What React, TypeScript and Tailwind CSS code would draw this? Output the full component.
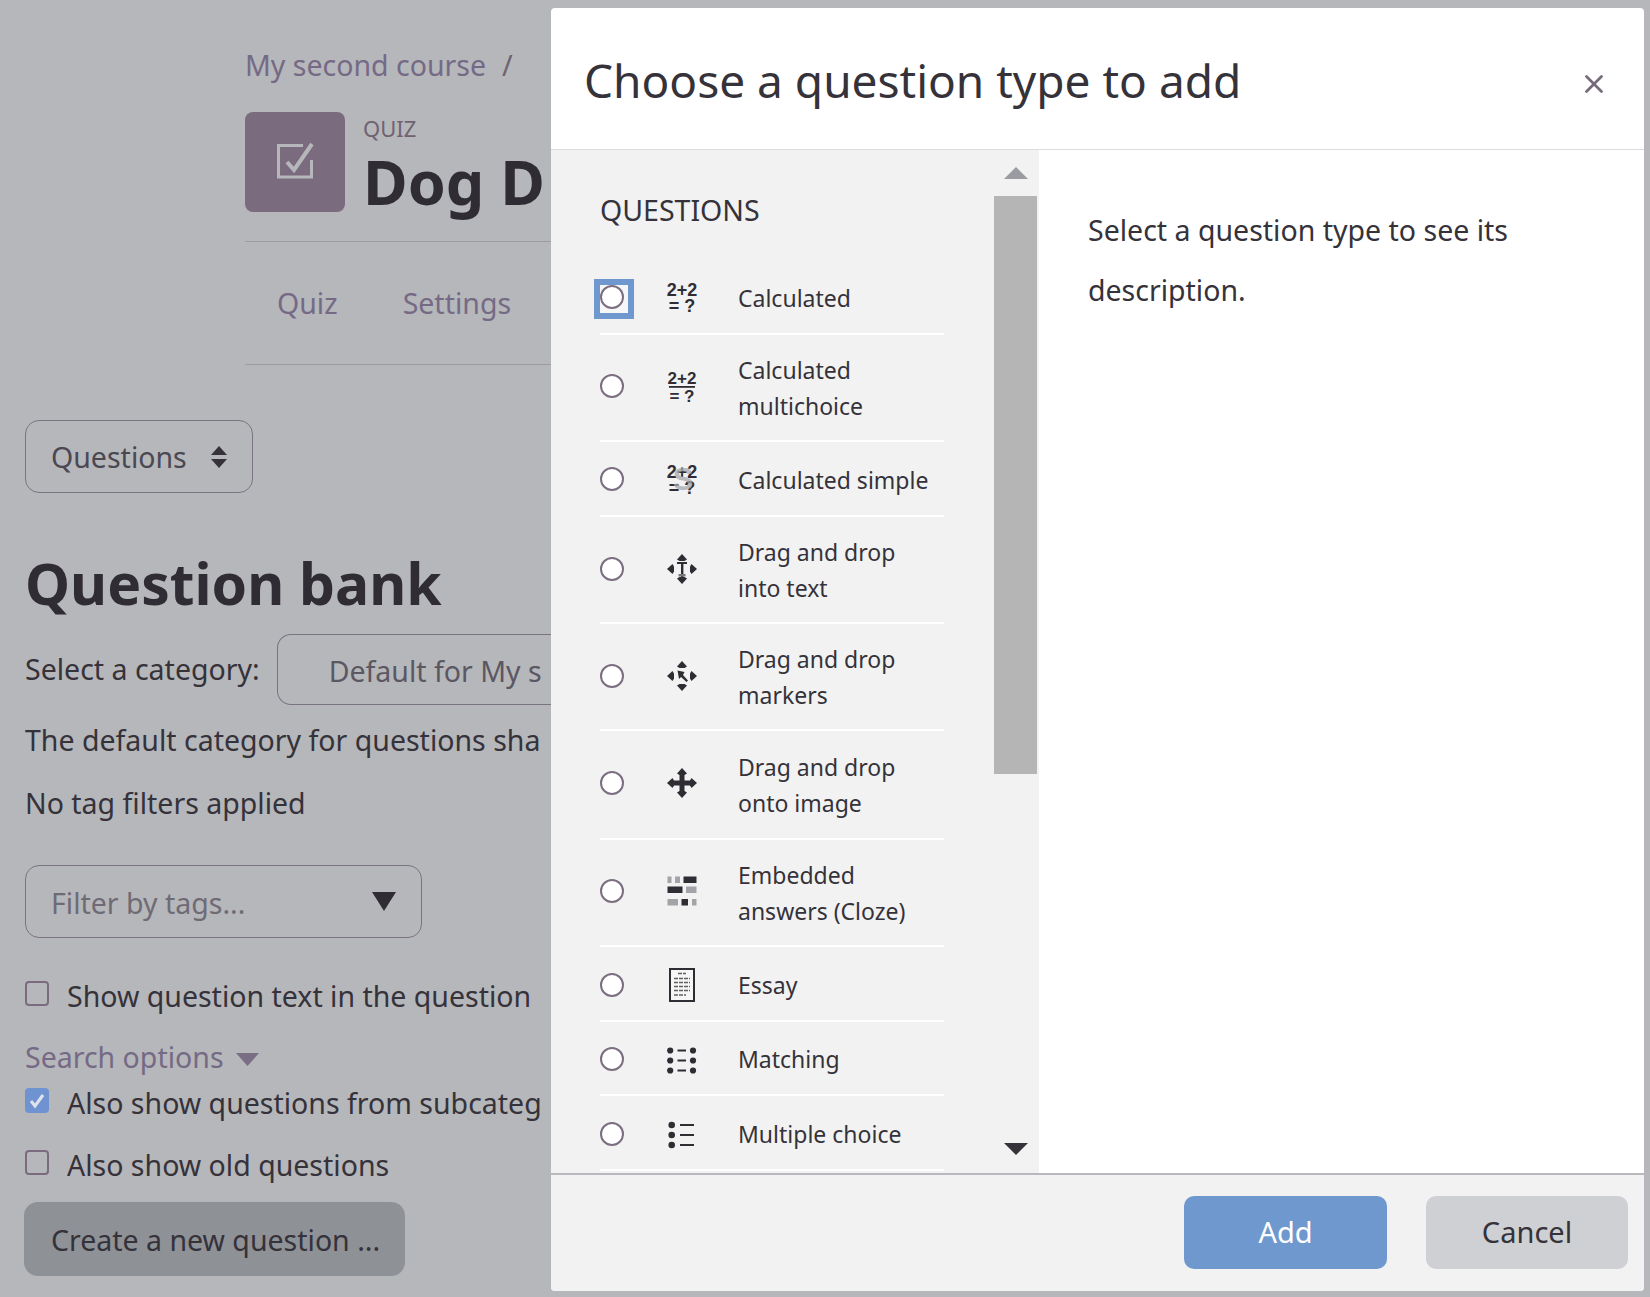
import { X } from "lucide-react";

function SumIcon({ rule, ghost }: { rule?: boolean; ghost?: boolean }) {
  return (
    <svg width="30" height="34" viewBox="0 0 30 34" className="overflow-visible text-[#2f2d33]">
      <text x="15" y={rule ? 15 : 16} textAnchor="middle" fontSize={rule ? 17 : 18} fontWeight="700" fill="currentColor" fontFamily="Liberation Sans, sans-serif">2+2</text>
      {rule && <rect x="2" y="17" width="26" height="1.8" fill="currentColor" />}
      <text x="15" y={rule ? 33 : 32} textAnchor="middle" fontSize={rule ? 17 : 18} fontWeight="700" fill="currentColor" fontFamily="Liberation Sans, sans-serif">= ?</text>
      {ghost && (
        <text x="16" y="28" textAnchor="middle" fontSize="31" fontWeight="700" fill="#a5a8ac" opacity="0.75" fontFamily="Liberation Sans, sans-serif">S</text>
      )}
    </svg>
  );
}

function MoveIcon({ kind }: { kind: "text" | "markers" | "image" }) {
  return (
    <svg width="30" height="30" viewBox="0 0 30 30" fill="#2f2d33">
      {/* arrow heads */}
      <polygon points="15,0 20,5.5 17.5,7 12.5,7 10,5.5" />
      <polygon points="15,30 20,24.5 17.5,23 12.5,23 10,24.5" />
      <polygon points="0,15 5.5,10 7,12.5 7,17.5 5.5,20" />
      <polygon points="30,15 24.5,10 23,12.5 23,17.5 24.5,20" />
      {kind === "image" && (
        <>
          <rect x="12.5" y="5" width="5" height="20" />
          <rect x="5" y="12.5" width="20" height="5" />
        </>
      )}
      {kind === "text" && (
        <>
          <rect x="10" y="8" width="10" height="2" />
          <rect x="14" y="8" width="2.4" height="15" />
          <rect x="11.5" y="20" width="7" height="2.5" fill="#77777c" />
        </>
      )}
      {kind === "markers" && (
        <path d="M10.5 9.5 L17.5 11 L16 14 L21 19.5 L19.5 21 L14 16 L12 18 Z" />
      )}
    </svg>
  );
}

function ClozeIcon() {
  return (
    <svg width="30" height="30" viewBox="0 0 30 30">
      <rect x="0.5" y="0.5" width="4" height="6.5" fill="#a2a4a8" />
      <rect x="8" y="0.5" width="5" height="6.5" fill="#a2a4a8" />
      <rect x="16.5" y="0.5" width="13" height="6.5" fill="#2f2d33" />
      <rect x="0.5" y="10.5" width="15" height="6.5" fill="#2f2d33" />
      <rect x="19" y="10.5" width="10.5" height="6.5" fill="#a2a4a8" />
      <rect x="0.5" y="23" width="10.5" height="6.5" fill="#a2a4a8" />
      <rect x="14.5" y="23" width="6.5" height="6.5" fill="#2f2d33" />
      <rect x="25" y="23" width="4.5" height="6.5" fill="#a2a4a8" />
    </svg>
  );
}

function EssayIcon() {
  return (
    <svg width="30" height="34" viewBox="0 0 30 34" fill="none" stroke="#2f2d33">
      <rect x="3" y="1" width="24" height="32" strokeWidth="2" fill="#f6f6f6" />
      <path d="M11 5.5h8M7 10.5h16M7 14.5h16M7 18.5h16M7 22.5h16M7 27h12" strokeWidth="1.3" strokeDasharray="4 1" opacity="0.75" />
    </svg>
  );
}

function MatchingIcon() {
  return (
    <svg width="30" height="32" viewBox="0 0 30 32" fill="#2f2d33">
      {[7.5, 17.5, 27.5].map((y) => (
        <g key={y}>
          <circle cx="3.2" cy={y} r="3.1" />
          <circle cx="26" cy={y} r="3.1" />
          <rect x="10.5" y={y - 1} width="8.5" height="2" />
        </g>
      ))}
    </svg>
  );
}

function ListIcon() {
  return (
    <svg width="30" height="32" viewBox="0 0 30 32" fill="#2f2d33">
      {[7, 17, 27].map((y) => (
        <g key={y}>
          <circle cx="4.7" cy={y} r="3.3" />
          <rect x="13" y={y - 1} width="14" height="2" />
        </g>
      ))}
    </svg>
  );
}

const questionTypes = [
  { name: ["Calculated"], icon: <SumIcon />, h: "h-[75px]", shift: "", focused: true },
  { name: ["Calculated", "multichoice"], icon: <SumIcon rule />, h: "h-[107px]", shift: "-translate-y-[2px]" },
  { name: ["Calculated simple"], icon: <SumIcon ghost />, h: "h-[75px]", shift: "" },
  { name: ["Drag and drop", "into text"], icon: <MoveIcon kind="text" />, h: "h-[107px]", shift: "-translate-y-[1px]" },
  { name: ["Drag and drop", "markers"], icon: <MoveIcon kind="markers" />, h: "h-[107px]", shift: "-translate-y-[1px]" },
  { name: ["Drag and drop", "onto image"], icon: <MoveIcon kind="image" />, h: "h-[109px]", shift: "-translate-y-[2px]" },
  { name: ["Embedded", "answers (Cloze)"], icon: <ClozeIcon />, h: "h-[107px]", shift: "-translate-y-[2px]" },
  { name: ["Essay"], icon: <EssayIcon />, h: "h-[75px]", shift: "translate-y-[1px]" },
  { name: ["Matching"], icon: <MatchingIcon />, h: "h-[74px]", shift: "translate-y-[1px]" },
  { name: ["Multiple choice"], icon: <ListIcon />, h: "h-[75px]", shift: "translate-y-[1px]" },
];

function Checkbox({ checked, className }: { checked?: boolean; className: string }) {
  if (checked) {
    return (
      <span className={`flex h-[25px] w-[24px] items-center justify-center rounded-[4px] bg-[#6f93d0] ${className}`}>
        <svg width="18" height="18" viewBox="0 0 18 18" fill="none" stroke="#dfe3ea" strokeWidth="3">
          <path d="M3 9l4 5 8-11" />
        </svg>
      </span>
    );
  }
  return <span className={`h-[25px] w-[24px] rounded-[4px] border-2 border-[#7a6c7e] ${className}`} />;
}

export default function App() {
  return (
    <div className="relative h-[1297px] w-[1650px] overflow-hidden bg-[#b6b7ba] font-['Noto_Sans',sans-serif] text-[28.5px] text-[#35323a]">
      {/* Page behind the dialog */}
      <div className="w-[551px] whitespace-nowrap pl-[25px] pt-[44px]">
        <div className="ml-[220px]">
          <div className="flex h-[42px] items-center gap-[16px] text-[#756a86]">
            <span>My second course</span>
            <span className="text-[#6f6372]">/</span>
          </div>
          <div className="mt-[26px] flex h-[130px] gap-[18px] border-b border-[#9b9ba0]">
            <div className="flex h-[100px] w-[100px] items-center justify-center rounded-[8px] bg-[#7b6b7f]">
              <svg width="44" height="44" viewBox="0 0 44 44" fill="none" stroke="#b6b7ba" strokeWidth="3">
                <path d="M30 5.5H5.5V37H38.5V20" />
                <path d="M14 22l7 8 18-26" strokeWidth="4" />
              </svg>
            </div>
            <div>
              <div className="h-[32px] text-[22px] leading-[32px] text-[#6f6372]">QUIZ</div>
              <div className="text-[61px] font-bold leading-[76px] text-[#2f2d33]">Dog D</div>
            </div>
          </div>
          <div className="flex h-[123px] items-center gap-[65px] border-b border-[#9b9ba0] pl-[32px] text-[#756a86]">
            <span>Quiz</span>
            <span>Settings</span>
          </div>
        </div>

        <div className="mt-[55px] flex h-[73px] w-[228px] items-center justify-between rounded-[14px] border border-[#7a7480] px-[25px]">
          <span className="pt-[1px] text-[#4b4853]">Questions</span>
          <svg width="16" height="22" viewBox="0 0 16 22" fill="#35323a">
            <path d="M8 0l8 9H0zM8 22l-8-9h16z" />
          </svg>
        </div>

        <h1 className="mt-[56px] flex h-[70px] items-center text-[57px] font-bold text-[#2f2d33]">Question bank</h1>

        <div className="mt-[15px] flex h-[71px] items-center gap-[17px]">
          <span className="pb-[1px]">Select a category:</span>
          <div className="flex h-[71px] flex-1 items-center rounded-l-[14px] border border-r-0 border-[#7a7480] pl-[51px] pt-[4px] text-[#5b5763]">
            Default for My s
          </div>
        </div>

        <div className="mt-[15px] flex h-[40px] items-center">The default category for questions sha</div>
        <div className="mt-[23px] flex h-[40px] items-center">No tag filters applied</div>

        <div className="mt-[42px] flex h-[73px] w-[397px] items-center justify-between rounded-[14px] border border-[#7a7480] pl-[25px] pr-[25px]">
          <span className="pt-[3px] text-[#6f6b75]">Filter by tags...</span>
          <svg width="24" height="19" viewBox="0 0 24 19" fill="#2f2d33">
            <path d="M0 0h24L12 19z" />
          </svg>
        </div>

        <div className="mt-[38px] flex h-[40px] items-center gap-[18px]">
          <Checkbox className="mb-[6px]" />
          <span>Show question text in the question</span>
        </div>
        <div className="mt-[21px] flex h-[40px] items-center gap-[12px] text-[#756a86]">
          <span>Search options</span>
          <svg width="23" height="13" viewBox="0 0 23 13" fill="#7a6e85" className="mt-[4px]">
            <path d="M0 0h23L11.5 13z" />
          </svg>
        </div>
        <div className="mt-[6px] flex h-[40px] items-center gap-[18px]">
          <Checkbox checked className="mb-[5px]" />
          <span>Also show questions from subcateg</span>
        </div>
        <div className="mt-[22px] flex h-[40px] items-center gap-[18px]">
          <Checkbox className="mb-[6px]" />
          <span>Also show old questions</span>
        </div>
        <button className="-ml-[1px] mt-[17px] h-[74px] w-[381px] rounded-[14px] bg-[#8e9196] pl-[27px] pt-[3px] text-left">
          Create a new question ...
        </button>
      </div>

      {/* Dialog */}
      <div className="absolute left-[551px] top-[8px] flex h-[1283px] w-[1093px] flex-col overflow-hidden rounded-[4px] bg-white">
        <div className="flex h-[142px] shrink-0 items-center justify-between border-b border-[#dcdcdc] pl-[33px] pr-[35px]">
          <h2 className="pt-[4px] text-[46px] text-[#35323a]">Choose a question type to add</h2>
          <X size={30} strokeWidth={2.2} className="mt-[11px] text-[#75697a]" />
        </div>

        <div className="flex min-h-0 flex-1">
          <div className="flex w-[488px] shrink-0 overflow-hidden bg-[#f2f2f2]">
            <div className="w-[443px] shrink-0 pl-[49px]">
              <div className="flex h-[110px] items-center pt-[10px] text-[28.5px] text-[#35323a]">QUESTIONS</div>
              {questionTypes.map((q) => (
                <div key={q.name.join(" ")} className={`flex w-[344px] items-center border-b-[2px] border-white ${q.h}`}>
                  <span className={`flex w-[24px] shrink-0 items-center justify-center ${q.shift}`}>
                    {q.focused ? (
                      <span className="ml-[3px] mt-[4px] flex h-[40px] w-[40px] shrink-0 items-center justify-center bg-[#6f98cf] p-[6px]">
                        <span className="flex h-[28px] w-[28px] items-center justify-center bg-[#f6f6f6] pb-[3px] pr-[3px]">
                          <span className="h-[24px] w-[24px] shrink-0 rounded-full border-2 border-[#7a6e80] bg-white" />
                        </span>
                      </span>
                    ) : (
                      <span className="h-[24px] w-[24px] rounded-full border-2 border-[#7a6e80] bg-white" />
                    )}
                  </span>
                  <span className={`ml-[43px] flex w-[30px] shrink-0 justify-center ${q.shift}`}>{q.icon}</span>
                  <div className={`ml-[41px] text-[23px] leading-[36px] ${q.name.length === 1 ? "pt-[2px]" : ""}`}>
                    {q.name.map((line) => (
                      <div key={line}>{line}</div>
                    ))}
                  </div>
                </div>
              ))}
            </div>
            {/* Scrollbar */}
            <div className="flex w-[43px] shrink-0 flex-col items-center">
              <svg width="24" height="12" viewBox="0 0 24 12" fill="#9a9ba0" className="mt-[17px] shrink-0">
                <path d="M12 0l12 12H0z" />
              </svg>
              <div className="mt-[17px] h-[578px] w-full shrink-0 bg-[#b5b5b6]" />
              <svg width="24" height="12" viewBox="0 0 24 12" fill="#35323a" className="mt-[369px] shrink-0">
                <path d="M12 12L0 0h24z" />
              </svg>
            </div>
          </div>
          <div className="flex-1 pl-[49px] pt-[50px] text-[28.5px] leading-[60px]">
            Select a question type to see its description.
          </div>
        </div>

        <div className="flex h-[118px] shrink-0 items-center justify-end gap-[39px] border-t-2 border-[#b9b9bd] bg-[#f2f2f2] pb-[2px] pr-[16px]">
          <button className="h-[73px] w-[203px] rounded-[10px] bg-[#6f98cf] text-[29px] text-white">Add</button>
          <button className="h-[73px] w-[202px] rounded-[10px] bg-[#ced0d4] text-[29px]">Cancel</button>
        </div>
      </div>
    </div>
  );
}
